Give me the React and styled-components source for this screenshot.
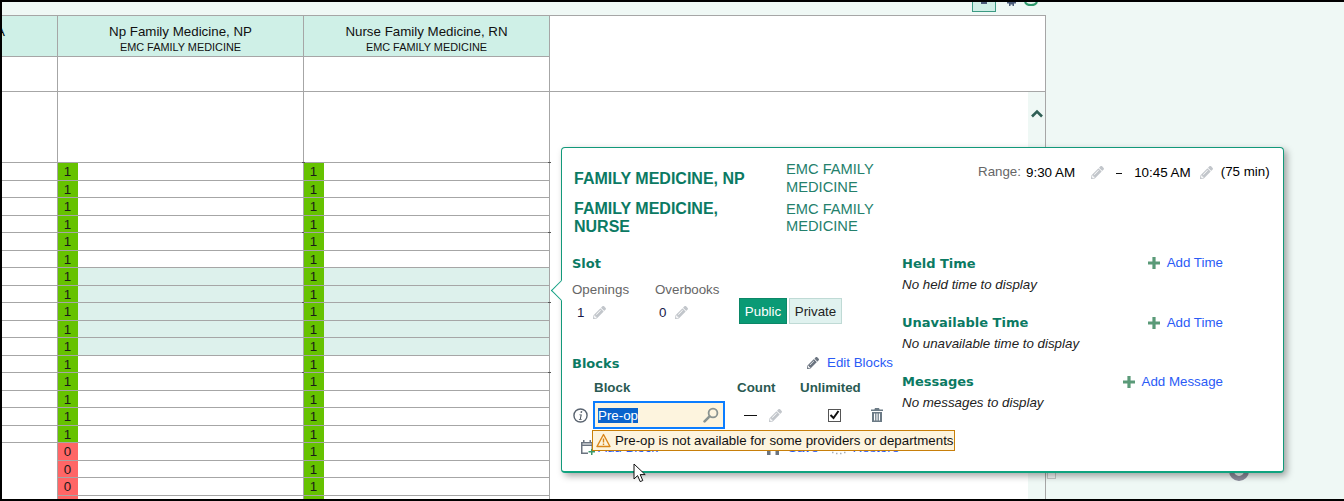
import React from 'react';
import styled, { createGlobalStyle } from 'styled-components';
import { FaPencilAlt } from 'react-icons/fa';

const GlobalStyle = createGlobalStyle`
  html, body {
    margin: 0;
    padding: 0;
    overflow: hidden;
  }
  body {
    font-family: "Liberation Sans", Arial, sans-serif;
    font-size: 13.33px;
    color: #000;
  }
`;

const LINE = '#a6a6a6';
const HEAD_GREEN = '#0b7a63';
const LINK_BLUE = '#2a5bf6';

const Frame = styled('div')`
  position: relative;
  box-sizing: border-box;
  width: 1344px;
  height: 501px;
  border-top: 2px solid #000;
  border-left: 2px solid #000;
  border-bottom: 2px solid #000;
  background: #eff8f5;
  overflow: hidden;
  display: flex;
  flex-direction: column;
`;

const Toolbar = styled('div')`
  flex: none;
  width: 1044px;
  height: 13px;
  display: flex;
  align-items: flex-start;
  padding-left: 970px;
  box-sizing: border-box;
`;

const ToolButton = styled('div')`
  box-sizing: border-box;
  width: 24px;
  height: 10px;
  background: #cfeee6;
  border: 1px solid #3c9a83;
  border-top: none;
  display: flex;
  justify-content: center;
`;

const ToolGlyph = styled('span')`
  width: 6px;
  height: 2px;
  background: #4a5a78;
`;

const GearStub = styled('svg')`
  margin-left: 11px;
  width: 9px;
  height: 4px;
`;

const RefreshStub = styled('svg')`
  margin-left: 8px;
  width: 14px;
  height: 4px;
`;

const Main = styled('div')`
  flex: 1;
  min-height: 0;
  display: flex;
`;

const Table = styled('div')`
  flex: none;
  width: 1044px;
  box-sizing: border-box;
  border-top: 1px solid ${LINE};
  border-right: 1px solid ${LINE};
  display: flex;
`;

const Column = styled('div')`
  flex: none;
  box-sizing: border-box;
  width: ${(p) => p.$width}px;
  border-left: ${(p) => (p.$divided ? `1px solid ${LINE}` : 'none')};
  display: flex;
  flex-direction: column;
`;

const WideColumn = styled(Column)`
  flex: 1;
  width: auto;
`;

const HeaderCell = styled('div')`
  flex: none;
  box-sizing: border-box;
  height: 41px;
  background: #cff0e7;
  border-bottom: 1px solid ${LINE};
  display: flex;
  flex-direction: column;
  align-items: center;
  padding-top: 8px;
  overflow: hidden;
`;

const ClippedHeader = styled(HeaderCell)`
  align-items: flex-start;
`;

const ClippedLetter = styled('span')`
  margin-left: -6px;
  font-size: 13.33px;
  line-height: 16px;
`;

const ProviderName = styled('div')`
  font-size: 13.33px;
  line-height: 16px;
  color: #111;
`;

const ProviderDept = styled('div')`
  font-size: 10.9px;
  line-height: 13px;
  margin-top: 1px;
  color: #111;
`;

const EmptyCell = styled('div')`
  flex: none;
  box-sizing: border-box;
  height: ${(p) => p.$height}px;
  background: #fff;
  border-bottom: 1px solid ${LINE};
`;

const Row = styled('div')`
  position: relative;
  flex: none;
  box-sizing: border-box;
  height: ${(p) => (p.$tall ? 18 : 17)}px;
  background: ${(p) => (p.$active ? '#ddf1ec' : '#fff')};
  border-bottom: ${(p) => (p.$plain ? 'none' : `1px solid ${LINE}`)};
  display: flex;
`;

const Tick = styled('span')`
  position: absolute;
  top: -1px;
  right: -2px;
  width: 3px;
  height: 1px;
  background: #555;
`;

const SlotCount = styled('div')`
  flex: none;
  width: 20px;
  padding-right: 1px;
  box-sizing: border-box;
  background: ${(p) => (p.$empty ? '#ff6666' : '#66c200')};
  font-size: 13.33px;
  line-height: 17px;
  text-align: center;
  color: #1a1a1a;
`;

const BodyFill = styled('div')`
  flex: 1;
  display: flex;
  background: #fff;
`;

const BodyWhite = styled('div')`
  flex: 1;
`;

const ScrollGutter = styled('div')`
  flex: none;
  width: 17px;
  background: #eff8f5;
  display: flex;
  justify-content: center;
  padding-top: 17px;
  box-sizing: border-box;
`;

const ChevronUp = styled('svg')`
  width: 12px;
  height: 9px;
`;

const SidePanel = styled('div')`
  flex: 1;
  display: flex;
  align-items: flex-start;
  padding: 446px 0 0 1px;
`;

const SideBox = styled('div')`
  flex: none;
  box-sizing: border-box;
  width: 9px;
  height: 18px;
  background: #f3f6f5;
  border: 1px solid #c4c8c7;
`;

const SideRing = styled('div')`
  flex: none;
  box-sizing: border-box;
  width: 20px;
  height: 20px;
  margin-left: 173px;
  border: 5px solid #8b8b9b;
  border-radius: 50%;
`;

const Popup = styled('div')`
  position: absolute;
  left: 559px;
  top: 145px;
  box-sizing: border-box;
  width: 723px;
  height: 326px;
  background: #fff;
  border: 1px solid #12997a;
  border-bottom-width: 2px;
  border-bottom-color: #0fa37f;
  border-radius: 4px;
  box-shadow: 3px 3px 7px rgba(0, 0, 0, 0.35);
  display: flex;
  flex-direction: column;
`;

const PopupArrow = styled('span')`
  position: absolute;
  left: -8px;
  top: 135px;
  box-sizing: border-box;
  width: 15px;
  height: 15px;
  background: #fff;
  border-left: 1px solid #12a083;
  border-bottom: 1px solid #12a083;
  transform: rotate(45deg);
`;

const PopupHeader = styled('div')`
  display: flex;
  margin-top: 13px;
  padding-left: 12px;
`;

const ProviderGrid = styled('div')`
  flex: none;
  width: 404px;
  display: grid;
  grid-template-columns: 212px 1fr;
  row-gap: 4px;
  align-items: center;
`;

const ProviderTitle = styled('div')`
  width: 190px;
  font-size: 16px;
  font-weight: bold;
  line-height: 18px;
  color: ${HEAD_GREEN};
`;

const DeptName = styled('div')`
  width: 110px;
  font-size: 14.67px;
  line-height: 17.5px;
  color: #24806c;
`;

const RangeRow = styled('div')`
  display: flex;
  align-items: flex-start;
  padding-top: 3px;
`;

const RangeLabel = styled('span')`
  color: #666;
  line-height: 16px;
`;

const RangeTime = styled('span')`
  margin-left: ${(p) => p.$gap}px;
  padding-top: 1px;
  line-height: 16px;
  font-size: 13.4px;
`;

const RangeDash = styled('span')`
  margin-left: 12px;
  width: 6px;
  height: 1px;
  margin-top: 9px;
  background: #111;
`;

const RangeTotal = styled('span')`
  margin-left: 8px;
  line-height: 16px;
`;

const PencilIcon = styled(FaPencilAlt)`
  flex: none;
  width: ${(p) => p.$size || 13}px;
  height: ${(p) => p.$size || 13}px;
  margin-left: ${(p) => p.$gap || 0}px;
  margin-top: ${(p) => p.$top || 0}px;
  color: ${(p) => (p.$dark ? '#6b7480' : '#c2c6cb')};
`;

const PopupBody = styled('div')`
  display: flex;
  margin-top: 20px;
  padding-left: 10px;
`;

const LeftPane = styled('div')`
  flex: none;
  width: 330px;
`;

const RightPane = styled('div')`
  flex: none;
  width: 321px;
  display: flex;
  flex-direction: column;
  gap: 22px;
`;

const SectionTitle = styled('div')`
  font-family: "DejaVu Sans", Verdana, sans-serif;
  font-size: 13px;
  font-weight: bold;
  line-height: 16px;
  color: ${HEAD_GREEN};
`;

const SlotRow = styled('div')`
  display: flex;
  align-items: flex-start;
  margin-top: 10px;
`;

const Stat = styled('div')`
  flex: none;
  width: ${(p) => p.$width}px;
`;

const StatLabel = styled('div')`
  color: #666;
  line-height: 16px;
`;

const StatValue = styled('div')`
  display: flex;
  align-items: center;
  height: 16px;
  margin-top: 6px;
  padding-left: ${(p) => p.$indent}px;
  color: #1a1a4a;
`;

const Segments = styled('div')`
  display: flex;
  gap: 2px;
  margin-top: 16px;
`;

const Segment = styled('div')`
  box-sizing: border-box;
  width: ${(p) => p.$width}px;
  height: 26px;
  display: flex;
  align-items: center;
  justify-content: center;
  background: ${(p) => (p.$on ? '#0a9a75' : '#e0f2ef')};
  border: 1px solid ${(p) => (p.$on ? '#0b8767' : '#bfdad5')};
  color: ${(p) => (p.$on ? '#fff' : '#222')};
`;

const BlocksHead = styled('div')`
  display: flex;
  align-items: center;
  justify-content: space-between;
  width: 321px;
  margin-top: 32px;
`;

const LinkRow = styled('div')`
  display: flex;
  align-items: center;
  gap: ${(p) => p.$gap || 7}px;
  margin-top: ${(p) => (p.$raised ? -2 : 0)}px;
`;

const TextLink = styled('a')`
  color: ${LINK_BLUE};
  line-height: 16px;
`;

const BlockGrid = styled('div')`
  display: grid;
  grid-template-columns: 21px 144px 63px 71px 30px;
  align-items: center;
`;

const BlockHeads = styled(BlockGrid)`
  margin-top: 8px;
`;

const BlockHead = styled('div')`
  grid-column: ${(p) => p.$col};
  font-weight: bold;
  line-height: 16px;
  padding-left: ${(p) => p.$indent || 0}px;
  color: #2a5a52;
`;

const BlockEntry = styled(BlockGrid)`
  position: relative;
  height: 28px;
  margin-top: 5px;
`;

const InfoIcon = styled('svg')`
  width: 15px;
  height: 15px;
  margin-left: 1px;
`;

const BlockInput = styled('div')`
  box-sizing: border-box;
  width: 132px;
  height: 28px;
  background: #fdf4de;
  border: 2px solid #0b7dff;
  display: flex;
  align-items: center;
  justify-content: space-between;
  padding: 0 4px 0 3px;
`;

const SelectedText = styled('span')`
  background: #0a63cc;
  color: #fff;
  line-height: 15px;
`;

const SearchIcon = styled('svg')`
  width: 16px;
  height: 16px;
`;

const CountCell = styled('div')`
  display: flex;
  align-items: center;
  padding-left: 7px;
`;

const CountDash = styled('span')`
  width: 13px;
  height: 1px;
  background: #111;
`;

const CheckCell = styled('div')`
  padding-left: 28px;
  display: flex;
`;

const CheckBox = styled('div')`
  box-sizing: border-box;
  width: 13px;
  height: 13px;
  background: #fff;
  border: 1px solid #555;
  display: flex;
  align-items: center;
  justify-content: center;
`;

const CheckMark = styled('svg')`
  width: 11px;
  height: 10px;
`;

const TrashIcon = styled('svg')`
  width: 12px;
  height: 14px;
`;

const Warning = styled('div')`
  position: absolute;
  left: 20px;
  top: 29px;
  box-sizing: border-box;
  width: 363px;
  height: 21px;
  background: #fdf4de;
  border: 1px solid #c87f0a;
  display: flex;
  align-items: center;
  gap: 4px;
  padding-left: 3px;
  font-size: 13.3px;
  white-space: nowrap;
  color: #111;
  z-index: 2;
`;

const WarnIcon = styled('svg')`
  flex: none;
  width: 15px;
  height: 15px;
`;

const BlockFooter = styled('div')`
  display: flex;
  align-items: center;
  height: 16px;
  margin-top: 10px;
  padding-left: 8px;
`;

const CalendarIcon = styled('svg')`
  flex: none;
  width: 15px;
  height: 15px;
`;

const FooterLink = styled(TextLink)`
  margin-left: ${(p) => p.$gap}px;
  padding-top: 2px;
`;

const FooterIcon = styled('svg')`
  flex: none;
  width: ${(p) => p.$width}px;
  height: 16px;
  margin-left: ${(p) => p.$gap}px;
`;

const TimeSection = styled('div')`
  height: 37px;
`;

const TimeHead = styled('div')`
  display: flex;
  align-items: center;
  justify-content: space-between;
`;

const PlusIcon = styled('svg')`
  flex: none;
  width: 12px;
  height: 12px;
`;

const EmptyNote = styled('div')`
  margin-top: 5px;
  font-style: italic;
  line-height: 16px;
  color: #222;
`;

const Cursor = styled('svg')`
  position: absolute;
  left: 631px;
  top: 461px;
  width: 13px;
  height: 20px;
  z-index: 3;
`;

const ROW_COUNT = 21;
const rows = Array.from({ length: ROW_COUNT }, (_, i) => ({
  id: i,
  tall: i % 2 === 0,
  tick: i % 4 === 0 && i < 16,
  active: i >= 6 && i <= 10,
}));

const Plus = () => (
  <PlusIcon viewBox="0 0 12 12">
    <path d="M4.4 0h3.2v4.4H12v3.2H7.6V12H4.4V7.6H0V4.4h4.4z" fill="#5a9a78" />
  </PlusIcon>
);

const ProviderColumn = ({ name, emptyFrom }) => (
  <Column $width={246} $divided>
    <HeaderCell>
      <ProviderName>{name}</ProviderName>
      <ProviderDept>EMC FAMILY MEDICINE</ProviderDept>
    </HeaderCell>
    <EmptyCell $height={35} />
    <EmptyCell $height={71} />
    {rows.map((r) => (
      <Row key={r.id} $tall={r.tall} $active={r.active}>
        <SlotCount $empty={r.id >= emptyFrom}>{r.id >= emptyFrom ? 0 : 1}</SlotCount>
        {r.tick && <Tick />}
      </Row>
    ))}
  </Column>
);

const TimeBlock = ({ title, note, action, raised }) => (
  <TimeSection>
    <TimeHead>
      <SectionTitle>{title}</SectionTitle>
      <LinkRow $raised={raised}>
        <Plus />
        <TextLink>{action}</TextLink>
      </LinkRow>
    </TimeHead>
    <EmptyNote>{note}</EmptyNote>
  </TimeSection>
);

export default function App() {
  return (
    <Frame>
      <GlobalStyle />
      <Toolbar>
        <ToolButton>
          <ToolGlyph />
        </ToolButton>
        <GearStub viewBox="0 0 9 4">
          <path d="M0 0h9v1.5H7V4H5.5V2.5h-2V4H2V1.5H0z" fill="#4a5a78" />
        </GearStub>
        <RefreshStub viewBox="0 0 14 4">
          <path d="M1 0c1 2.4 3.2 3 6 3s5-.6 6-3" fill="none" stroke="#2f9a6c" strokeWidth="2" />
        </RefreshStub>
      </Toolbar>
      <Main>
        <Table>
          <Column $width={55}>
            <ClippedHeader>
              <ClippedLetter>A</ClippedLetter>
            </ClippedHeader>
            <EmptyCell $height={35} />
            <EmptyCell $height={71} />
            {rows.map((r) => (
              <Row key={r.id} $tall={r.tall} $plain={r.id > 15} />
            ))}
          </Column>
          <ProviderColumn name="Np Family Medicine, NP" emptyFrom={16} />
          <ProviderColumn name="Nurse Family Medicine, RN" emptyFrom={ROW_COUNT} />
          <WideColumn $divided>
            <EmptyCell $height={76} />
            <BodyFill>
              <BodyWhite />
              <ScrollGutter>
                <ChevronUp viewBox="0 0 12 9">
                  <path d="M1 7.5l5-5 5 5" fill="none" stroke="#2f5f55" strokeWidth="2.6" />
                </ChevronUp>
              </ScrollGutter>
            </BodyFill>
          </WideColumn>
        </Table>
        <SidePanel>
          <SideBox />
          <SideRing />
        </SidePanel>
      </Main>

      <Popup>
        <PopupArrow />
        <PopupHeader>
          <ProviderGrid>
            <ProviderTitle>FAMILY MEDICINE, NP</ProviderTitle>
            <DeptName>EMC FAMILY MEDICINE</DeptName>
            <ProviderTitle>FAMILY MEDICINE, NURSE</ProviderTitle>
            <DeptName>EMC FAMILY MEDICINE</DeptName>
          </ProviderGrid>
          <RangeRow>
            <RangeLabel>Range:</RangeLabel>
            <RangeTime $gap={5}>9:30 AM</RangeTime>
            <PencilIcon $gap={16} $top={2} />
            <RangeDash />
            <RangeTime $gap={12}>10:45 AM</RangeTime>
            <PencilIcon $gap={9} $top={2} />
            <RangeTotal>(75 min)</RangeTotal>
          </RangeRow>
        </PopupHeader>

        <PopupBody>
          <LeftPane>
            <SectionTitle>Slot</SectionTitle>
            <SlotRow>
              <Stat $width={83}>
                <StatLabel>Openings</StatLabel>
                <StatValue $indent={5}>
                  1<PencilIcon $gap={9} />
                </StatValue>
              </Stat>
              <Stat $width={84}>
                <StatLabel>Overbooks</StatLabel>
                <StatValue $indent={4}>
                  0<PencilIcon $gap={9} />
                </StatValue>
              </Stat>
              <Segments>
                <Segment $on $width={48}>Public</Segment>
                <Segment $width={53}>Private</Segment>
              </Segments>
            </SlotRow>

            <BlocksHead>
              <SectionTitle>Blocks</SectionTitle>
              <LinkRow $gap={8} $raised>
                <PencilIcon $size={12} $dark />
                <TextLink>Edit Blocks</TextLink>
              </LinkRow>
            </BlocksHead>

            <BlockHeads>
              <BlockHead $col={2} $indent={1}>Block</BlockHead>
              <BlockHead $col={3}>Count</BlockHead>
              <BlockHead $col={4}>Unlimited</BlockHead>
            </BlockHeads>

            <BlockEntry>
              <InfoIcon viewBox="0 0 16 16">
                <circle cx="8" cy="8" r="7" fill="none" stroke="#5a6470" strokeWidth="1.5" />
                <path d="M8.3 3.4h1.600l-.3 1.600H8zM6.600 6.800h2.800l-1.100 4.800h1l-.2.9H6.200l.2-.9h.9l.8-3.900h-.9z" fill="#3f4a55" />
              </InfoIcon>
              <BlockInput>
                <SelectedText>Pre-op</SelectedText>
                <SearchIcon viewBox="0 0 16 16">
                  <circle cx="10" cy="6" r="4.4" fill="none" stroke="#8a9390" strokeWidth="1.8" />
                  <path d="M6.6 9.4L1.6 14.4" stroke="#8a9390" strokeWidth="2.6" strokeLinecap="round" />
                </SearchIcon>
              </BlockInput>
              <CountCell>
                <CountDash />
                <PencilIcon $gap={12} />
              </CountCell>
              <CheckCell>
                <CheckBox>
                  <CheckMark viewBox="0 0 11 10">
                    <path d="M1.5 5l3 3 5-7" fill="none" stroke="#111" strokeWidth="2" />
                  </CheckMark>
                </CheckBox>
              </CheckCell>
              <TrashIcon viewBox="0 0 12 14">
                <path
                  d="M4 0h4l.6 1.500H12V3H0V1.500h3.400zM1 4h10v10H1zm2 1.600v6.800h1.200V5.600zm2.400 0v6.800h1.200V5.600zm2.400 0v6.800H9V5.600z"
                  fill="#6b7a85"
                  fillRule="evenodd"
                />
              </TrashIcon>
              <Warning>
                <WarnIcon viewBox="0 0 15 15">
                  <path d="M7.5 1.5L14 13.5H1z" fill="#fdf4de" stroke="#d9861a" strokeWidth="1.4" strokeLinejoin="round" />
                  <path d="M7.5 5.5v4M7.5 10.6v1.5" stroke="#d9861a" strokeWidth="1.4" />
                </WarnIcon>
                Pre-op is not available for some providers or departments
              </Warning>
            </BlockEntry>

            <BlockFooter>
              <CalendarIcon viewBox="0 0 15 15">
                <path
                  d="M1 2h2V0h1.500v2h5V0H11v2h2v6h-1.500V6h-9v6.500H8V14H1zm1.500 2.500h9V3.500h-9z"
                  fill="#6b7480"
                />
                <path d="M11 8.500h1.500V11H15v1.500h-2.500V15H11v-2.500H8.500V11H11z" fill="#3c9a6c" />
              </CalendarIcon>
              <FooterLink $gap={3}>Add Block</FooterLink>
              <FooterIcon $gap={109} $width={12} viewBox="0 0 12 16">
                <path d="M0 0h12v16H8.500v-5h-5v5H0z" fill="#6b7480" />
              </FooterIcon>
              <FooterLink $gap={9}>Save</FooterLink>
              <FooterIcon $gap={13} $width={15} viewBox="0 0 15 16">
                <path d="M1 13.500h1.500M5 14.500h1.500M9 14.500h1.500M13 13.500h1.500" stroke="#a9afb5" strokeWidth="1.5" />
              </FooterIcon>
              <FooterLink $gap={6}>Restore</FooterLink>
            </BlockFooter>
          </LeftPane>

          <RightPane>
            <TimeBlock title="Held Time" note="No held time to display" action="Add Time" raised />
            <TimeBlock title="Unavailable Time" note="No unavailable time to display" action="Add Time" />
            <TimeBlock title="Messages" note="No messages to display" action="Add Message" />
          </RightPane>
        </PopupBody>
      </Popup>

      <Cursor viewBox="0 0 13 20">
        <path d="M1 1v15l3.600-3.400 2.600 6 2.600-1.100-2.600-5.900h5z" fill="#fff" stroke="#111" strokeWidth="1" />
      </Cursor>
    </Frame>
  );
}
